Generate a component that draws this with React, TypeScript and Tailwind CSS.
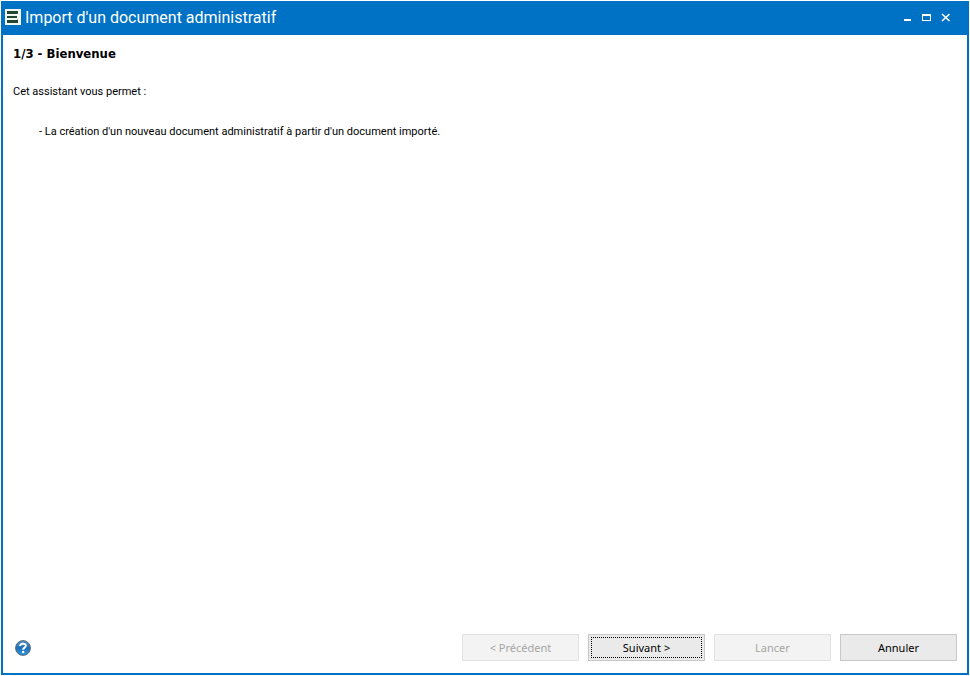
import React from 'react';

const buttonClass =
  "flex h-[27px] w-[117px] items-center justify-center border border-[#c8c8c8] bg-[#eaeaea] p-[2px] font-['Noto_Sans',sans-serif] text-[11px] leading-4 text-black disabled:border-[#e2e2e2] disabled:bg-[#f3f3f3] disabled:text-[#a5a5a5]";

function AppIcon() {
  return (
    <svg className="h-4 w-4 shrink-0" viewBox="0 0 16 16" aria-hidden="true">
      <rect width="16" height="16" fill="#f4f5f1" />
      <path fill="#1f4732" d="M2 2h11v2.6L12 5H2zM2 7h10v2H2zM2 11h10l1-.8V14H2z" />
    </svg>
  );
}

function HelpIcon() {
  return (
    <svg className="h-4 w-4" viewBox="0 0 17 17" aria-hidden="true">
      <defs>
        <linearGradient id="help-fill" x1="0" y1="0" x2="0" y2="1">
          <stop offset="0" stopColor="#5295cb" />
          <stop offset="0.5" stopColor="#1d6fb8" />
          <stop offset="1" stopColor="#2f9be0" />
        </linearGradient>
      </defs>
      <circle cx="8.5" cy="8.5" r="7.9" fill="url(#help-fill)" stroke="#5f6870" strokeWidth="1" />
      <path
        fill="none"
        stroke="#fff"
        strokeWidth="2.1"
        d="M5.4 6.4C5.5 3.2 11.5 3.1 11.5 6.1c0 2-2.9 2-2.9 4.3"
      />
      <path fill="#fff" d="M7.5 11.6h2.3v2.2H7.5z" />
    </svg>
  );
}

function TitleBar() {
  return (
    <header className="flex h-[34px] items-center justify-between bg-[#0072c6] pr-[17px] pl-1 text-white">
      <div className="flex items-start gap-1">
        <AppIcon />
        <h1 className="text-[16px] leading-[18px] whitespace-nowrap">Import d'un document administratif</h1>
      </div>
      <div className="flex items-center gap-[7px]">
        <button type="button" aria-label="Réduire" className="h-3 w-3">
          <svg className="h-3 w-3" viewBox="0 0 12 12" shapeRendering="crispEdges">
            <path fill="#fff" d="M2 7h7v2H2z" />
          </svg>
        </button>
        <button type="button" aria-label="Agrandir" className="h-3 w-3">
          <svg className="h-3 w-3" viewBox="0 0 12 12" shapeRendering="crispEdges">
            <path fill="#fff" fillRule="evenodd" d="M1 2h9v7H1zM2 4v4h7V4z" />
          </svg>
        </button>
        <button type="button" aria-label="Fermer" className="h-3 w-3">
          <svg className="h-3 w-3" viewBox="0 0 12 12">
            <path fill="none" stroke="#fff" strokeWidth="1.6" d="M2 2l7.5 7M9.5 2L2 9" />
          </svg>
        </button>
      </div>
    </header>
  );
}

export default function App() {
  return (
    <div className="flex min-h-screen flex-col bg-white p-px font-['Roboto',sans-serif] text-black">
      <div className="flex flex-1 flex-col bg-[#0072c6]">
        <TitleBar />

        <main className="mx-[2px] mb-[2px] flex flex-1 flex-col bg-white">
          {/* Step content */}
          <section className="flex-1 px-[10px] pt-[11px] text-[11px] leading-4">
            <h2 className="font-['DejaVu_Sans_Condensed','DejaVu_Sans',sans-serif] text-[13px] leading-4 font-bold">
              1/3 - Bienvenue
            </h2>
            <p className="mt-[22px]">Cet assistant vous permet :</p>
            <ul className="mt-6 pl-[26px]">
              <li>- La création d'un nouveau document administratif à partir d'un document importé.</li>
            </ul>
          </section>

          {/* Wizard navigation */}
          <footer className="flex items-center justify-between pr-[10px] pb-3 pl-3">
            <button type="button" aria-label="Aide">
              <HelpIcon />
            </button>
            <div className="flex gap-[9px]">
              <button type="button" disabled className={buttonClass}>
                &lt; Précédent
              </button>
              <button type="button" className={buttonClass}>
                <span className="flex h-full w-full items-center justify-center border border-dotted border-black">
                  Suivant &gt;
                </span>
              </button>
              <button type="button" disabled className={buttonClass}>
                Lancer
              </button>
              <button type="button" className={buttonClass}>
                Annuler
              </button>
            </div>
          </footer>
        </main>
      </div>
    </div>
  );
}
